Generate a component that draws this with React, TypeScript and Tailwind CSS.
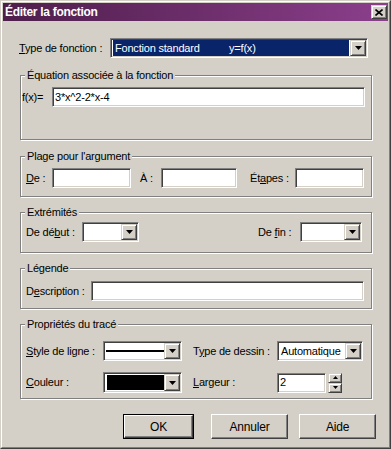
import React from 'react'

const sunken =
  'border border-t-[#808080] border-l-[#808080] border-r-white border-b-white shadow-[inset_1px_1px_0_#404040,inset_-1px_-1px_0_#d4d0c8] bg-white p-[1px]'
const raised =
  'border border-t-[#d4d0c8] border-l-[#d4d0c8] border-r-[#404040] border-b-[#404040] shadow-[inset_1px_1px_0_#fff,inset_-1px_-1px_0_#808080] bg-[#d4d0c8]'

function Arrow() {
  return (
    <div className={`${raised} w-[16px] h-full flex items-center justify-center shrink-0`}>
      <svg width="7" height="4" viewBox="0 0 7 4">
        <path d="M0 0h7L3.5 4z" fill="#000" />
      </svg>
    </div>
  )
}

function Combo({ w, h = 20, children }: { w: number; h?: number; children?: React.ReactNode }) {
  return (
    <div className={`${sunken} flex`} style={{ width: w, height: h }}>
      <div className="flex-1 flex items-center min-w-0 overflow-hidden whitespace-nowrap">{children}</div>
      <Arrow />
    </div>
  )
}

function Field({ w, children }: { w: number; children?: React.ReactNode }) {
  return (
    <div className={`${sunken} h-[20px] flex items-center pl-[2px]`} style={{ width: w }}>
      {children}
    </div>
  )
}

function Group({ title, h, mt, children }: { title: string; h: number; mt: string; children: React.ReactNode }) {
  return (
    <div
      className={`relative w-[352px] border border-[#808080] shadow-[inset_1px_1px_0_#fff,1px_1px_0_#fff] ${mt}`}
      style={{ height: h }}
    >
      <span className="absolute top-[-8px] left-[4px] bg-[#d4d0c8] px-[2px] leading-[14px] whitespace-nowrap">
        {title}
      </span>
      {children}
    </div>
  )
}

function Btn({ label, w, def }: { label: string; w: number; def?: boolean }) {
  return (
    <div className={def ? 'border border-black' : ''}>
      <div
        className={`border border-t-white border-l-white border-r-[#404040] border-b-[#404040] shadow-[inset_-1px_-1px_0_#808080] bg-[#d4d0c8] flex items-center justify-center text-[12px] ${def ? 'h-[23px]' : 'h-[25px]'}`}
        style={{ width: def ? w - 2 : w }}
      >
        {label}
      </div>
    </div>
  )
}

export default function App() {
  return (
    <div
      className="w-[391px] h-[449px] border border-t-[#d4d0c8] border-l-[#d4d0c8] border-r-[#404040] border-b-[#404040] bg-[#d4d0c8] text-[11px] tracking-[-0.2px] text-black"
      style={{ fontFamily: '"Liberation Sans", Arial, sans-serif' }}
    >
      <div className="h-full border border-t-white border-l-white border-r-[#808080] border-b-[#808080] p-[1px]">
        {/* title bar */}
        <div className="h-[18px] flex items-center justify-between bg-gradient-to-r from-[#4e1e4b] to-[#8c3f8c]">
          <span className="pl-[2px] text-white font-bold text-[12px] leading-[18px] tracking-[-0.3px]">Éditer la fonction</span>
          <div className={`${raised} w-[16px] h-[14px] mr-[1px] flex items-center justify-center`}>
            <svg width="8" height="7" viewBox="0 0 8 7">
              <path d="M0.5 0.5l7 6M7.5 0.5l-7 6" stroke="#000" strokeWidth="1.6" />
            </svg>
          </div>
        </div>

        {/* type de fonction */}
        <div className="flex items-center mt-[17px] pl-[16px]">
          <span className="w-[91px]">
            <span className="underline">T</span>ype de fonction :
          </span>
          <Combo w={258}>
            <div className="mx-[1px] h-[16px] flex-1 bg-[#0a246a] text-white flex items-center pl-[2px]">
              <span className="w-[114px]">Fonction standard</span>
              <span>y=f(x)</span>
            </div>
          </Combo>
        </div>

        <div className="pl-[17px]">
          <Group title="Équation associée à la fonction" h={65} mt="mt-[17px]">
            <div className="flex items-center pt-[11px] pl-[1px]">
              <span className="w-[30px]">f(x)=</span>
              <Field w={313}>3*x^2-2*x-4</Field>
            </div>
          </Group>

          <Group title="Plage pour l'argument" h={41} mt="mt-[16px]">
            <div className="flex items-center pt-[11px] pl-[5px]">
              <span className="w-[26px]">
                <span className="underline">D</span>e :
              </span>
              <Field w={79} />
              <span className="w-[21px] ml-[9px]">À :</span>
              <Field w={76} />
              <span className="w-[45px] ml-[13px]">
                Ét<span className="underline">a</span>pes :
              </span>
              <Field w={69} />
            </div>
          </Group>

          <Group title="Extrémités" h={41} mt="mt-[15px]">
            <div className="flex items-center pt-[9px] pl-[5px]">
              <span className="w-[56px]">
                De dé<span className="underline">b</span>ut :
              </span>
              <Combo w={57} />
              <span className="w-[42px] ml-[119px]">
                De <span className="underline">f</span>in :
              </span>
              <Combo w={62} />
            </div>
          </Group>

          <Group title="Légende" h={41} mt="mt-[15px]">
            <div className="flex items-center pt-[12px] pl-[5px]">
              <span className="w-[65px]">
                D<span className="underline">e</span>scription :
              </span>
              <Field w={273} />
            </div>
          </Group>

          <Group title="Propriétés du tracé" h={75} mt="mt-[15px]">
            <div className="flex items-center pt-[16px] pl-[5px]">
              <span className="w-[77px]">
                <span className="underline">S</span>tyle de ligne :
              </span>
              <Combo w={79}>
                <div className="ml-[1px] w-[58px] h-[2px] bg-black" />
              </Combo>
              <span className="w-[84px] ml-[11px]">
                T<span className="underline">y</span>pe de dessin :
              </span>
              <Combo w={86}>
                <span className="pl-[2px]">Automatique</span>
              </Combo>
            </div>
            <div className="flex items-center mt-[11px] pl-[5px]">
              <span className="w-[77px]">
                <span className="underline">C</span>ouleur :
              </span>
              <Combo w={79} h={21}>
                <div className="ml-[2px] w-[57px] h-[15px] bg-black" />
              </Combo>
              <span className="w-[84px] ml-[11px]">
                <span className="underline">L</span>argeur :
              </span>
              <Field w={49}>2</Field>
              <div className="flex flex-col ml-[2px]">
                <div className={`${raised} w-[14px] h-[10px] flex items-center justify-center`}>
                  <svg width="5" height="3" viewBox="0 0 5 3">
                    <path d="M2.5 0L5 3H0z" fill="#000" />
                  </svg>
                </div>
                <div className={`${raised} w-[14px] h-[10px] flex items-center justify-center`}>
                  <svg width="5" height="3" viewBox="0 0 5 3">
                    <path d="M0 0h5L2.5 3z" fill="#000" />
                  </svg>
                </div>
              </div>
            </div>
          </Group>
        </div>

        {/* buttons */}
        <div className="flex mt-[15px] pl-[120px]">
          <Btn label="OK" w={71} def />
          <div className="ml-[17px]">
            <Btn label="Annuler" w={77} />
          </div>
          <div className="ml-[11px]">
            <Btn label="Aide" w={77} />
          </div>
        </div>
      </div>
    </div>
  )
}
